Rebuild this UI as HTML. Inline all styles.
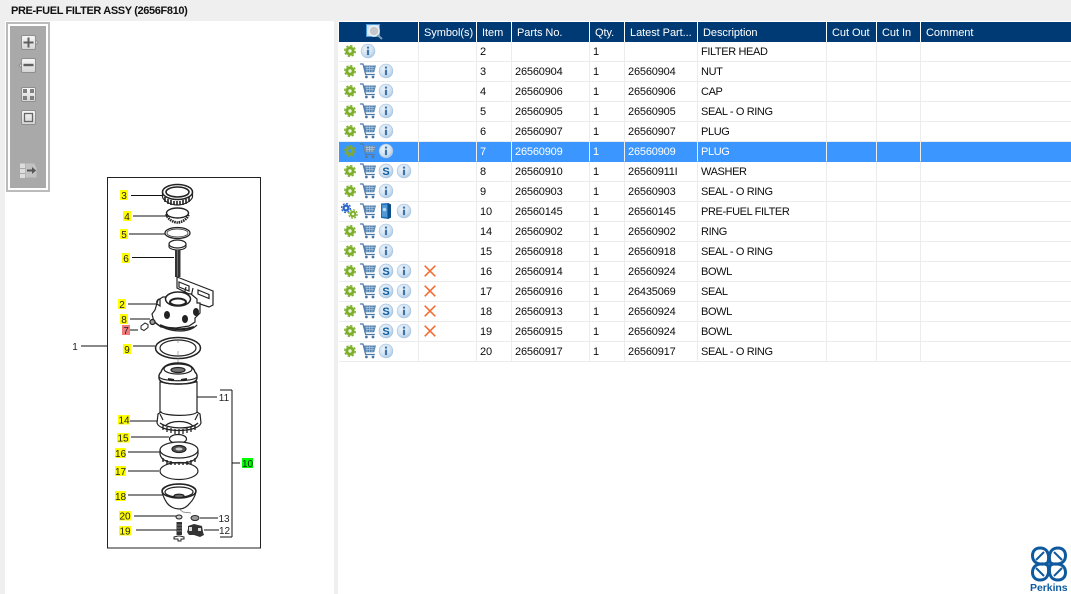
<!DOCTYPE html>
<html><head><meta charset="utf-8"><style>
html,body{margin:0;padding:0;width:1071px;height:594px;overflow:hidden;background:#efefef;font-family:"Liberation Sans",sans-serif}
.title{position:absolute;left:11px;top:4px;font-size:11px;font-weight:bold;color:#111;line-height:14px;letter-spacing:-.37px}
.left{position:absolute;left:5px;top:21px;width:329px;height:573px;background:#fff}
.right{position:absolute;left:338px;top:21px;width:733px;height:573px;background:#fff}
table{position:absolute;left:339px;top:22px;border-collapse:separate;border-spacing:0;table-layout:fixed;width:732px;font-size:11px;color:#0c0c0c}
td,th{box-sizing:border-box;height:20px;padding:1px 0 0 3px;border-right:1px solid #ececec;border-bottom:1px solid #ececec;white-space:nowrap;overflow:hidden;font-weight:normal;text-align:left;position:relative;letter-spacing:-.18px;line-height:18px}
td:nth-child(7){letter-spacing:-.38px}
th{background:#003a74;color:#fff;border-right:1px solid #fff;border-bottom:0;padding:1px 0 0 5px;letter-spacing:-.05px;height:20px}
tr.s td{background:#3b97ff;color:#fff;border-bottom-color:#3b97ff;border-right-color:#eee}
td:last-child,th:last-child{border-right:0}
td svg,th svg{position:absolute;left:0;top:0}
.tb{position:absolute;left:6px;top:22px;width:36px;height:162px;border:2px solid #bbb;padding:2px;background:#fff}
.tb i{display:block;width:36px;height:162px;background:#a9a9a9}
.abs{position:absolute;left:0;top:0}
.logo{position:absolute;left:1030px;top:582px;font-size:10.5px;font-weight:bold;color:#0f5a9e;letter-spacing:-.05px;line-height:12px}
</style></head><body>
<svg width="0" height="0" style="position:absolute"><defs>
<radialGradient id="b" cx=".4" cy=".35" r=".75"><stop offset="0" stop-color="#eef5fb"/><stop offset=".6" stop-color="#d0e1f1"/><stop offset="1" stop-color="#9dbfe0"/></radialGradient>
<linearGradient id="btn" x1="0" y1="0" x2="0" y2="1"><stop offset="0" stop-color="#f7f7f7"/><stop offset="1" stop-color="#d4d4d4"/></linearGradient>
<g id="gear"><circle r="4.6" fill="#7cae2a"/><circle r="5.300" fill="none" stroke="#7cae2a" stroke-width="1.300" stroke-dasharray="2.400 1.760"/><circle r="1.700" fill="#eef4dc"/></g>
<g id="gearS"><circle r="4.6" fill="#7fa83a"/><circle r="5.300" fill="none" stroke="#7fa83a" stroke-width="1.300" stroke-dasharray="2.400 1.760"/><circle r="1.700" fill="#3b97ff"/></g>
<g id="gear2"><circle cx="-4" cy="-3" r="3.600" fill="#2a62c8"/><circle cx="-4" cy="-3" r="4.500" fill="none" stroke="#2a62c8" stroke-width="1.200" stroke-dasharray="2 1.530"/><circle cx="-4" cy="-3" r="1.300" fill="#e8f0fb"/><circle cx="3" cy="3" r="3.300" fill="#7cae2a"/><circle cx="3" cy="3" r="4.200" fill="none" stroke="#7cae2a" stroke-width="1.200" stroke-dasharray="2 1.300"/><circle cx="3" cy="3" r="1.300" fill="#eef4dc"/></g>
<g id="circ"><circle r="6.900" fill="url(#b)" stroke="#a8c4df" stroke-width=".6"/></g>
<g id="info"><use href="#circ"/><rect x="-1.100" y="-4.400" width="2.200" height="2" fill="#3d74aa"/><rect x="-1.100" y="-1.300" width="2.200" height="5.400" fill="#3d74aa"/></g>
<g id="cart"><path d="M-8-7h3l2.600 10.500h9.200" fill="none" stroke="#4a79a8" stroke-width="1.200"/><path d="M-4.600-5.500H8L6.200 1.200H-3z" fill="#5583b2"/><path d="M-2.500-3.600H7M-2-1.400H6.200M-1-5V1M1.500-5V1M4-5V1" stroke="#c9dbeb" stroke-width=".5"/><circle cx="-1.600" cy="6" r="1.400" fill="#4a79a8"/><circle cx="5" cy="6" r="1.400" fill="#4a79a8"/></g>
<g id="cartS"><path d="M-8-7h3l2.600 10.500h9.200" fill="none" stroke="#5c7a98" stroke-width="1.200"/><path d="M-4.600-5.500H8L6.200 1.200H-3z" fill="#6f8fae"/><path d="M-2.500-3.600H7M-2-1.400H6.200M-1-5V1M1.500-5V1M4-5V1" stroke="#cfdcea" stroke-width=".5"/><circle cx="-1.600" cy="6" r="1.400" fill="#5c7a98"/><circle cx="5" cy="6" r="1.400" fill="#5c7a98"/></g>
<g id="book"><path d="M-5-7.500l7-.5 3 1.500v13l-3 1.500-7-1z" fill="#1c70b8"/><path d="M2-8l3 1.500v13L2 8z" fill="#0d4e8c"/><path d="M-4-6l5-.4v12.500l-5-.6z" fill="#4f9ad6"/><circle cx="-1.500" cy="-1.500" r="1.800" fill="#b5d6f0"/></g>
<g id="x"><path d="M-5.300-5.300L5.300 5.300M5.300-5.300L-5.300 5.300" stroke="#f26a2e" stroke-width="1.500"/></g>
<g id="r1"><use href="#gear" x="11" y="9"/><use href="#cart" x="29" y="9"/><use href="#info" x="47" y="9"/></g>
</defs></svg>

<div class="title">PRE-FUEL FILTER ASSY (2656F810)</div>
<div class="left"></div>
<div class="right"></div>

<div class="tb"><i></i></div>
<svg class="abs" width="60" height="200" viewBox="0 0 60 200">
<g stroke="#8f8f8f" stroke-width="1" fill="url(#btn)">
<path d="M35.500 40l2.500 2.500-2.500 2.500z"/><path d="M21.500 63l-2.500 2.500 2.500 2.500z"/>
<rect x="21.500" y="35.500" width="14" height="14" rx="1.500"/>
<rect x="21.500" y="58.500" width="14" height="14" rx="1.500"/>
<rect x="21.500" y="87.500" width="14" height="14" rx="1.500"/>
<rect x="21.500" y="110.500" width="14" height="14" rx="1.500"/>
</g>
<path d="M28.500 37.500v10M23.500 42.500h10" stroke="#5f5f5f" stroke-width="2"/>
<path d="M23.500 65h10" stroke="#5f5f5f" stroke-width="2.400"/>
<path d="M23 89h4v4h-4zM30 89h4v4h-4zM23 96h4v4h-4zM30 96h4v4h-4z" fill="#808080"/>
<rect x="24.500" y="113.500" width="8" height="8" fill="none" stroke="#666" stroke-width="1.300"/>
<path d="M20 163.500h5v4.500h-5zM20 169h5v4h-5zM20 174h5v4h-5z" fill="#ddd"/>
<path d="M25.500 163.500h9l2 5v9h-11z" fill="#c2c2c2"/>
<path d="M27 170.500h6" stroke="#555" stroke-width="2"/><path d="M32 167l4 3.500-4 3.500z" fill="#555"/>
</svg>

<!-- exploded diagram -->
<svg class="abs" style="filter:blur(.3px)" width="335" height="594" viewBox="0 0 335 594" font-family="Liberation Sans,sans-serif" font-size="10" fill="#222">
<rect x="107.500" y="177.500" width="153" height="370.500" fill="none" stroke="#222"/>
<path d="M81 346h26M131 195.500h32M133 216h34M129 234h36M132 257.500h42M128 304h29M130 319h20M130 330h8M133 346h22M130 421h27M131 437h38M128 452h32M128 471h31M128 495h35M134 516h44M136 530h42M197 397h20M232 390v147M220 390h12M220 537h12M232 463h8M200 518h18M204 530h15" fill="none" stroke="#111" stroke-width="1"/>
<!-- 3 nut -->
<g fill="none" stroke="#222">
<ellipse cx="177.500" cy="192" rx="15" ry="7.500" fill="#fff" stroke-width="1.500"/>
<ellipse cx="177.500" cy="192" rx="11.500" ry="5" stroke-width="1.600"/>
<path d="M162.500 192v5c1 4 8 8 15 8s14-4 15-8v-5" stroke-width="1.200"/>
<path d="M165 197v5M168 199v5M171 200v5M174 201v4M177 201v4M180 201v4M183 200v5M186 199v5M189 197v5" stroke-width="1.600"/>
<!-- 4 cap -->
<ellipse cx="177.500" cy="213" rx="11" ry="5" fill="#fff" stroke-width="1.400"/>
<path d="M166.500 214c1 6 8 8.500 11 8.500s10-2.500 11-8.500" stroke-width="2.600" stroke-dasharray="1.500 .8"/>
<!-- 5 ring -->
<ellipse cx="177.500" cy="233" rx="12.500" ry="5.500" stroke-width="1.300"/>
<ellipse cx="177.500" cy="233" rx="10.500" ry="4" stroke-width=".7"/>
<!-- plug -->
<ellipse cx="177.500" cy="244" rx="8.500" ry="4" fill="#fff" stroke-width="1.200"/>
<path d="M169 244v3c1 2 5 3 8.500 3s7.500-1 8.500-3v-3" stroke-width="1.100"/>
</g>
<rect x="175" y="250" width="5.500" height="27" fill="#333"/>
<path d="M177.700 250v27" stroke="#999" stroke-width=".6"/>
<!-- bracket -->
<g fill="#fff" stroke="#222" stroke-width="1.200">
<path d="M177 277l36 14v14l-4 2-15-5-5-8-12-6z"/>
<path d="M179 282l10 4v5l-10-4zM198 290l11 4.500v4l-11-4.500z" fill="none"/>
<path d="M193 288l-2 9M186 287l-2 8" fill="none"/>
<!-- head -->
<path d="M158 300l5-3 8 0 8-4 12 1 6 5 0 4 3 0 0 10-5 5 0 4-6 4-13 2-15-1-7-5-2-8 3-4z"/>
<ellipse cx="178" cy="299" rx="12.500" ry="7" stroke-width="1.500"/>
<ellipse cx="178" cy="302" rx="8" ry="3.500" stroke-width="2"/>
<path d="M157 304c-1-3 1-5 3-5v7zM155 322c6 6 16 9 26 9 8 0 13-3 16-6" fill="none"/>
</g>
<g fill="#222"><ellipse cx="167" cy="315" rx="3" ry="4"/><ellipse cx="185" cy="319" rx="3" ry="4"/><ellipse cx="196" cy="312" rx="3" ry="4"/></g>
<path d="M160 325c8 4 22 6 34 2" fill="none" stroke="#222" stroke-width="2"/>
<!-- 7,8 -->
<circle cx="152.500" cy="322" r="2.500" fill="#999" stroke="#222" stroke-width="1.200"/>
<path d="M141 326l4-3 3 1.500v3l-4 3-3-1.500z" fill="#fff" stroke="#222"/>
<!-- 9 -->
<ellipse cx="178" cy="348" rx="22.500" ry="10.500" fill="none" stroke="#222" stroke-width="1.500"/>
<ellipse cx="178" cy="348" rx="18" ry="8" fill="none" stroke="#222" stroke-width="1.200"/>
<path d="M178 340v3M178 351v6M178 358v6" stroke="#777" stroke-width=".6"/>
<!-- 11 filter -->
<g fill="#fff" stroke="#222" stroke-width="1.200">
<path d="M160 382v33c4 5 33 5 37 0v-33z"/>
<path d="M159 376c0-2 1-3 2-4 2-6 8-9 17-9s15 3 17 9c1 1 2 2 2 4v2c0 3-4 6-19 6s-19-3-19-6z" stroke-width="1.400"/>
<ellipse cx="178" cy="369" rx="14" ry="5" fill="none"/>
<ellipse cx="178" cy="370" rx="7" ry="2.500" fill="#777"/>
<path d="M159 377c4 5 34 5 38 0M160 381c5 4 32 4 37 0" fill="none"/>
<path d="M168 379l6 1M181 380l6-1" stroke-width="2"/>
<!-- 14 -->
<path d="M158 414l3-2c2 4 33 5 36 0l3 2 1 9c-3 10-41 10-44 0z"/>
<path d="M160 423c8 6 31 7 38 0M163 425v5M167 427v5M171 428v5M175 429v5M179 429v5M183 429v5M187 428v5M191 427v5M195 425v5" fill="none" stroke-width="1.300"/>
<path d="M160 414l3 6M198 414l-3 6M165 426c6-6 22-6 28 0" fill="none"/>
<!-- 15 -->
<ellipse cx="178" cy="439" rx="8.500" ry="4.500" fill="none"/>
<!-- 16 -->
<ellipse cx="179" cy="450" rx="19" ry="8"/>
<path d="M160 450v4c1 6 8 9 19 9s18-3 19-9v-4" fill="none"/>
<path d="M163 458v4M167 460v4M171 461v4M175 462v3M179 462v3M183 462v3M187 461v4M191 460v4M195 458v4" fill="none" stroke-width="1.400"/>
<ellipse cx="179" cy="449" rx="7" ry="3.500" fill="#555"/>
<ellipse cx="179" cy="449" rx="3.500" ry="1.500" fill="#ccc" stroke="none"/>
<!-- 17 -->
<ellipse cx="179" cy="471" rx="19" ry="8.500" fill="none"/>
<!-- 18 -->
<path d="M162 492c0-4 7-8 17-8s17 4 17 8c-1 4-3 8-6 11-3 4-7 6-11 6s-9-2-12-6c-2-3-4-7-5-11z"/>
<ellipse cx="179" cy="491" rx="17" ry="7" fill="none" stroke-width="1.500"/>
<ellipse cx="179" cy="492" rx="14" ry="5" fill="none"/>
<ellipse cx="179" cy="496" rx="5" ry="1.800" fill="#666"/>
</g>
<path d="M179 509l4 3 8 1" fill="none" stroke="#777" stroke-width=".7"/>
<!-- 20,19 -->
<ellipse cx="179" cy="517" rx="3" ry="2" fill="#ccc" stroke="#222"/>
<rect x="176.500" y="522" width="5.500" height="13" fill="#333"/>
<path d="M177 525h5M177 528h5M177 531h5" stroke="#bbb" stroke-width=".6"/>
<path d="M174 537l4-1 2 0 4 1v2h-3v2h-3v-2h-4z" fill="#fff" stroke="#222"/>
<!-- 13,12 -->
<ellipse cx="195" cy="518" rx="4" ry="2.500" fill="#999" stroke="#222"/>
<path d="M188 526l6-2 8 2 1 6 1 3-4 2-6-2-5 0-2-3 1-3z" fill="#333"/>
<path d="M189 527h3v4h-3zM198 528h3v3h-3z" fill="#ddd"/>
<!-- labels -->
<g fill="#ff0">
<rect x="120" y="190" width="8" height="10"/><rect x="123" y="211" width="8" height="10"/><rect x="120" y="229" width="8" height="10"/><rect x="122" y="253" width="8" height="10"/><rect x="118" y="299" width="8" height="10"/><rect x="120" y="314" width="8" height="10"/><rect x="123" y="344" width="8" height="10"/>
<rect x="118" y="415" width="12" height="9.500"/><rect x="117" y="433" width="12" height="9.500"/><rect x="115" y="448" width="11" height="10"/><rect x="115" y="466" width="11" height="10"/><rect x="115" y="491" width="11" height="10"/><rect x="119" y="511" width="12" height="9.500"/><rect x="119" y="526" width="12" height="9.500"/>
</g>
<rect x="122" y="325" width="8" height="10" fill="#f27a7a"/>
<rect x="242" y="458" width="11" height="10" fill="#0f0"/>
<g text-anchor="middle">
<text x="124" y="199">3</text><text x="127" y="220">4</text><text x="124" y="238">5</text><text x="126" y="262">6</text><text x="122" y="308">2</text><text x="124" y="323">8</text><text x="126" y="334">7</text><text x="127" y="353">9</text>
<text x="124" y="423.500">14</text><text x="123" y="441.500">15</text><text x="120.500" y="457">16</text><text x="120.500" y="475">17</text><text x="120.500" y="500">18</text><text x="125" y="519.500">20</text><text x="125" y="534.500">19</text>
<text x="247.500" y="467">10</text><text x="224" y="401">11</text><text x="224" y="522">13</text><text x="224.500" y="534">12</text><text x="75" y="350">1</text>
</g>
</svg>

<table>
<colgroup><col style="width:80px"><col style="width:58px"><col style="width:35px"><col style="width:78px"><col style="width:35px"><col style="width:73px"><col style="width:129px"><col style="width:50px"><col style="width:44px"><col></colgroup>
<tr>
<th><svg width="80" height="20"><g transform="translate(27 2)"><rect x=".5" y=".5" width="13" height="12" fill="#cfe3f2" stroke="#4f9ad6"/><circle cx="8" cy="7" r="5" fill="#c4c8cc" stroke="#eef2f5" stroke-width="1.400"/><path d="M11.500 11l4.500 4" stroke="#7f9db8" stroke-width="2"/></g></svg></th>
<th>Symbol(s)</th><th>Item</th><th>Parts No.</th><th>Qty.</th><th>Latest Part...</th><th>Description</th><th>Cut Out</th><th>Cut In</th><th>Comment</th></tr>
<tr><td><svg width="80" height="20"><use href="#gear" x="11" y="9"/><use href="#info" x="29" y="9"/></svg></td><td></td><td>2</td><td></td><td>1</td><td></td><td>FILTER HEAD</td><td></td><td></td><td></td></tr>
<tr><td><svg width="80" height="20"><use href="#r1"/></svg></td><td></td><td>3</td><td>26560904</td><td>1</td><td>26560904</td><td>NUT</td><td></td><td></td><td></td></tr>
<tr><td><svg width="80" height="20"><use href="#r1"/></svg></td><td></td><td>4</td><td>26560906</td><td>1</td><td>26560906</td><td>CAP</td><td></td><td></td><td></td></tr>
<tr><td><svg width="80" height="20"><use href="#r1"/></svg></td><td></td><td>5</td><td>26560905</td><td>1</td><td>26560905</td><td>SEAL - O RING</td><td></td><td></td><td></td></tr>
<tr><td><svg width="80" height="20"><use href="#r1"/></svg></td><td></td><td>6</td><td>26560907</td><td>1</td><td>26560907</td><td>PLUG</td><td></td><td></td><td></td></tr>
<tr class="s"><td><svg width="80" height="20"><use href="#gearS" x="11" y="9"/><use href="#cartS" x="29" y="9"/><use href="#info" x="47" y="9"/></svg></td><td></td><td>7</td><td>26560909</td><td>1</td><td>26560909</td><td>PLUG</td><td></td><td></td><td></td></tr>
<tr><td><svg width="80" height="20"><use href="#r1"/><use href="#circ" x="47" y="9"/><text x="47" y="13" text-anchor="middle" font-size="11" font-weight="bold" fill="#0d5c9c">S</text><use href="#info" x="65" y="9"/></svg></td><td></td><td>8</td><td>26560910</td><td>1</td><td>26560911I</td><td>WASHER</td><td></td><td></td><td></td></tr>
<tr><td><svg width="80" height="20"><use href="#r1"/></svg></td><td></td><td>9</td><td>26560903</td><td>1</td><td>26560903</td><td>SEAL - O RING</td><td></td><td></td><td></td></tr>
<tr><td><svg width="80" height="20"><use href="#gear2" x="11" y="9"/><use href="#cart" x="29" y="9"/><use href="#book" x="47" y="9"/><use href="#info" x="65" y="9"/></svg></td><td></td><td>10</td><td>26560145</td><td>1</td><td>26560145</td><td>PRE-FUEL FILTER</td><td></td><td></td><td></td></tr>
<tr><td><svg width="80" height="20"><use href="#r1"/></svg></td><td></td><td>14</td><td>26560902</td><td>1</td><td>26560902</td><td>RING</td><td></td><td></td><td></td></tr>
<tr><td><svg width="80" height="20"><use href="#r1"/></svg></td><td></td><td>15</td><td>26560918</td><td>1</td><td>26560918</td><td>SEAL - O RING</td><td></td><td></td><td></td></tr>
<tr><td><svg width="80" height="20"><use href="#r1"/><use href="#circ" x="47" y="9"/><text x="47" y="13" text-anchor="middle" font-size="11" font-weight="bold" fill="#0d5c9c">S</text><use href="#info" x="65" y="9"/></svg></td><td><svg width="58" height="20"><use href="#x" x="11" y="9"/></svg></td><td>16</td><td>26560914</td><td>1</td><td>26560924</td><td>BOWL</td><td></td><td></td><td></td></tr>
<tr><td><svg width="80" height="20"><use href="#r1"/><use href="#circ" x="47" y="9"/><text x="47" y="13" text-anchor="middle" font-size="11" font-weight="bold" fill="#0d5c9c">S</text><use href="#info" x="65" y="9"/></svg></td><td><svg width="58" height="20"><use href="#x" x="11" y="9"/></svg></td><td>17</td><td>26560916</td><td>1</td><td>26435069</td><td>SEAL</td><td></td><td></td><td></td></tr>
<tr><td><svg width="80" height="20"><use href="#r1"/><use href="#circ" x="47" y="9"/><text x="47" y="13" text-anchor="middle" font-size="11" font-weight="bold" fill="#0d5c9c">S</text><use href="#info" x="65" y="9"/></svg></td><td><svg width="58" height="20"><use href="#x" x="11" y="9"/></svg></td><td>18</td><td>26560913</td><td>1</td><td>26560924</td><td>BOWL</td><td></td><td></td><td></td></tr>
<tr><td><svg width="80" height="20"><use href="#r1"/><use href="#circ" x="47" y="9"/><text x="47" y="13" text-anchor="middle" font-size="11" font-weight="bold" fill="#0d5c9c">S</text><use href="#info" x="65" y="9"/></svg></td><td><svg width="58" height="20"><use href="#x" x="11" y="9"/></svg></td><td>19</td><td>26560915</td><td>1</td><td>26560924</td><td>BOWL</td><td></td><td></td><td></td></tr>
<tr><td><svg width="80" height="20"><use href="#r1"/></svg></td><td></td><td>20</td><td>26560917</td><td>1</td><td>26560917</td><td>SEAL - O RING</td><td></td><td></td><td></td></tr>
</table>

<!-- Perkins logo -->
<svg class="abs" style="left:1030px;top:545px" width="38" height="38" viewBox="0 0 38 38">
<g fill="none" stroke="#0f5a9e" stroke-width="3">
<path d="M10 3c5 0 8 3 8.500 8 .3 3-.5 6-1 7-1 .5-4 1.300-7 1-5-.5-8-3.500-8-8.500C2.500 6 5.500 3 10 3z"/>
<path d="M28 3c-5 0-8 3-8.500 8-.3 3 .5 6 1 7 1 .5 4 1.300 7 1 5-.5 8-3.500 8-8.500C35.500 6 32.500 3 28 3z"/>
<path d="M10 35c5 0 8-3 8.500-8 .3-3-.5-6-1-7-1-.5-4-1.300-7-1-5 .5-8 3.500-8 8.500C2.500 32 5.500 35 10 35z"/>
<path d="M28 35c-5 0-8-3-8.500-8-.3-3 .5-6 1-7 1-.5 4-1.300 7-1 5 .5 8 3.500 8 8.500C35.500 32 32.500 35 28 35z"/>
<path d="M6 15L14 7M32 15L24 7M6 23L14 31M32 23L24 31" stroke-width="2"/>
</g></svg>
<div class="logo">Perkins</div>
</body></html>
